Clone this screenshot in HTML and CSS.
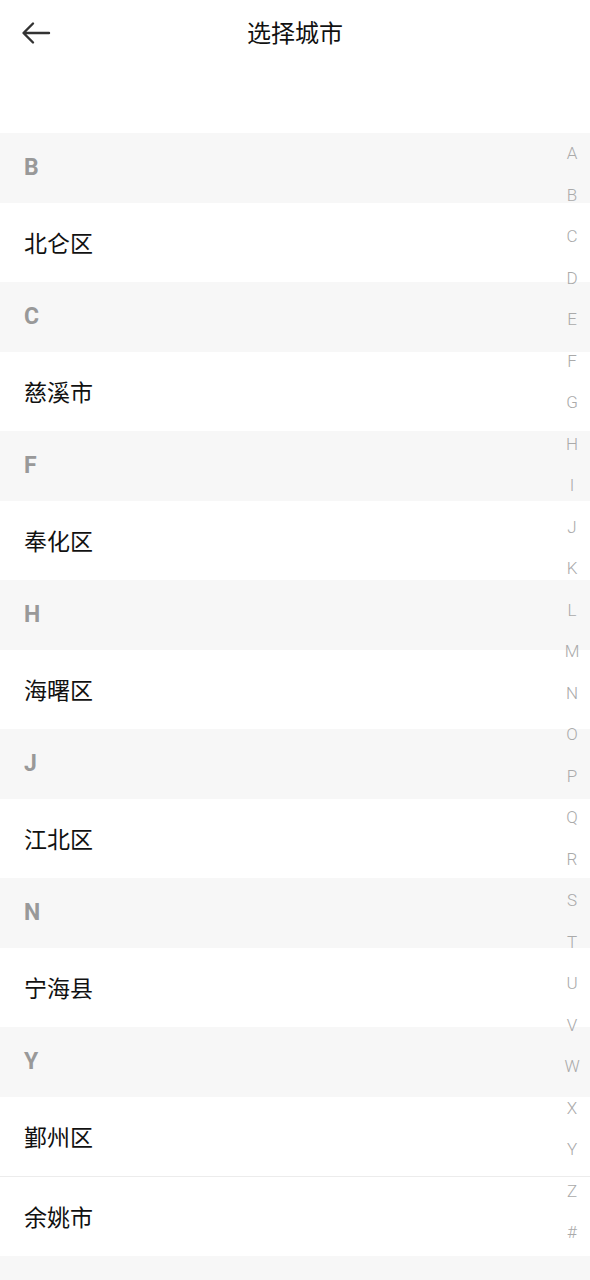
FILE: index.html
```html
<!DOCTYPE html>
<html lang="zh-CN">
<head>
<meta charset="utf-8">
<title>选择城市</title>
<link rel="stylesheet" href="styles.css">
</head>
<body>
<div class="page">
  <header class="topbar">
    <span class="back">
      <svg width="30" height="24" viewBox="0 0 30 24" aria-hidden="true">
        <path d="M28 12H3M12 2.5L2.5 12L12 21.5" fill="none" stroke="#333" stroke-width="2.4" stroke-linecap="round" stroke-linejoin="round"/>
      </svg>
    </span>
    <h1 class="title">选择城市</h1>
  </header>
  <div class="spacer"></div>
  <main class="list">
    <section class="group">
      <div class="group-head">B</div>
      <div class="item">北仑区</div>
    </section>
    <section class="group">
      <div class="group-head">C</div>
      <div class="item">慈溪市</div>
    </section>
    <section class="group">
      <div class="group-head">F</div>
      <div class="item">奉化区</div>
    </section>
    <section class="group">
      <div class="group-head">H</div>
      <div class="item">海曙区</div>
    </section>
    <section class="group">
      <div class="group-head">J</div>
      <div class="item">江北区</div>
    </section>
    <section class="group">
      <div class="group-head">N</div>
      <div class="item">宁海县</div>
    </section>
    <section class="group">
      <div class="group-head">Y</div>
      <div class="item">鄞州区</div>
      <div class="item">余姚市</div>
    </section>
  </main>
  <nav class="index">
    <span>A</span><span>B</span><span>C</span><span>D</span><span>E</span><span>F</span><span>G</span><span>H</span><span>I</span><span>J</span><span>K</span><span>L</span><span>M</span><span>N</span><span>O</span><span>P</span><span>Q</span><span>R</span><span>S</span><span>T</span><span>U</span><span>V</span><span>W</span><span>X</span><span>Y</span><span>Z</span><span>#</span>
  </nav>
</div>
</body>
</html>
```

FILE: styles.css
```css
html, body {
  margin: 0;
  padding: 0;
  background: #f7f7f7;
}
body {
  font-family: "Roboto", "Noto Sans CJK SC", sans-serif;
  color: #111;
}
.page {
  position: relative;
  width: 590px;
  min-height: 1280px;
}
.topbar {
  position: relative;
  height: 66px;
  background: #fff;
  display: flex;
  align-items: center;
  justify-content: center;
}
.back {
  position: absolute;
  left: 21px;
  top: 21px;
  width: 30px;
  height: 24px;
  display: flex;
}
.title {
  margin: 0 0 2px 0;
  font-family: "Noto Sans CJK SC", sans-serif;
  font-size: 24px;
  font-weight: 400;
  color: #111;
  line-height: 64px;
}
.spacer {
  height: 67px;
  background: #fff;
}
.list {
  display: flex;
  flex-direction: column;
}
.group-head {
  height: 70px;
  line-height: 70px;
  padding-left: 24px;
  background: #f7f7f7;
  font-family: "Roboto", sans-serif;
  font-weight: 700;
  font-size: 23px;
  color: #999;
}
.item {
  height: 79px;
  line-height: 79px;
  padding-left: 24px;
  background: #fff;
  font-family: "Noto Sans CJK SC", sans-serif;
  font-size: 23px;
  color: #111;
}
.item + .item {
  border-top: 1px solid #ececec;
}
.index {
  position: absolute;
  right: 0;
  top: 133px;
  width: 36px;
  display: flex;
  flex-direction: column;
  align-items: center;
  font-family: "Roboto", sans-serif;
  font-weight: 300;
  font-size: 17px;
  color: #aaa;
}
.index span {
  height: 41.5px;
  line-height: 41.5px;
}
```
